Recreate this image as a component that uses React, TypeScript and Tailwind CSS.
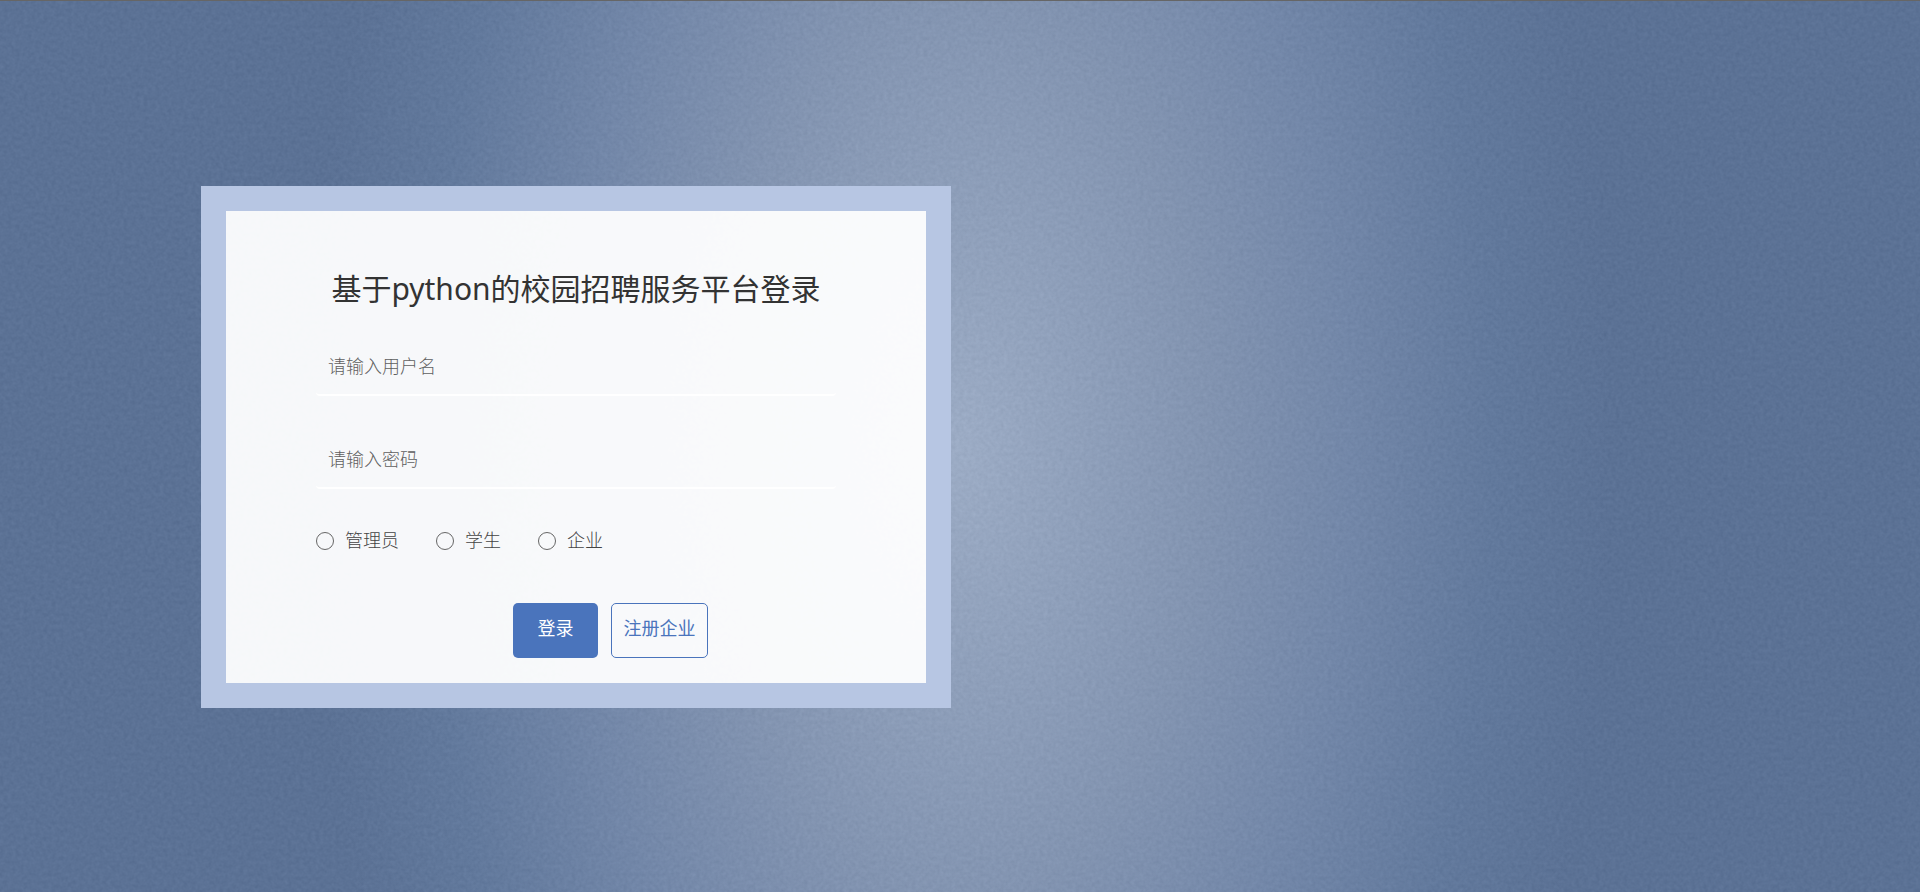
import { useState } from 'react';

const roles = ['管理员', '学生', '企业'];

const fields = [
  { name: 'username', type: 'text', placeholder: '请输入用户名' },
  { name: 'password', type: 'password', placeholder: '请输入密码' },
];

function Grain() {
  return (
    <svg className="absolute inset-0 w-full h-full opacity-[0.07] pointer-events-none" aria-hidden="true">
      <filter id="grain" colorInterpolationFilters="sRGB">
        <feTurbulence type="fractalNoise" baseFrequency="0.25" numOctaves="2" seed="4" />
        <feColorMatrix type="saturate" values="0" />
        <feComponentTransfer>
          <feFuncA type="linear" slope="0" intercept="1" />
        </feComponentTransfer>
      </filter>
      <rect width="100%" height="100%" filter="url(#grain)" />
    </svg>
  );
}

export default function App() {
  const [role, setRole] = useState('');

  return (
    <div className="relative min-h-screen overflow-hidden border-t border-[#666666] bg-[radial-gradient(650px_1200px_at_50%_50%,#9fb0cb_0%,#90a2bf_20%,#8396b5_38%,#7288ac_60%,#60799f_82%,#597197_100%)] font-['Noto_Sans','Noto_Sans_CJK_SC',sans-serif]">
      <Grain />
      <main className="relative flex min-h-screen items-center px-4 lg:pl-[201px]">
        {/* Login card */}
        <form
          className="w-full max-w-[750px] border-[25px] border-[#b7c6e3] bg-white/95 bg-clip-padding px-[90px] pt-[55px] pb-[25px]"
          onSubmit={(e) => e.preventDefault()}
        >
          <h1 className="text-center text-[30px] leading-[46px] text-[#333333]">基于python的校园招聘服务平台登录</h1>

          <div className="mt-7 flex flex-col gap-[37px]">
            {fields.map((f) => (
              <input
                key={f.name}
                name={f.name}
                type={f.type}
                placeholder={f.placeholder}
                aria-label={f.placeholder}
                className="h-14 w-full rounded border-b-2 border-white bg-transparent px-3 pb-0.5 text-lg font-light text-[#333333] outline-none placeholder:text-[#5f5f5f]"
              />
            ))}
          </div>

          <div className="mt-[37px] flex gap-[37px]">
            {roles.map((r) => (
              <label key={r} className="flex items-center gap-[11px] text-lg font-light text-[#444444]">
                <input
                  type="radio"
                  name="role"
                  value={r}
                  checked={role === r}
                  onChange={() => setRole(r)}
                  className="size-[18px] appearance-none rounded-full border border-[#666666] checked:border-[5px] checked:border-[#4a74bc]"
                />
                <span className="pb-0.5">{r}</span>
              </label>
            ))}
          </div>

          <div className="mt-[47px] flex justify-center gap-[13px] pl-[69px]">
            <button type="submit" className="h-[55px] w-[85px] rounded-[5px] bg-[#4a74bc] pb-1.5 text-lg text-white">
              登录
            </button>
            <button type="button" className="h-[55px] w-[97px] rounded-[5px] border border-[#4a74bc] pb-1.5 text-lg text-[#4a74bc]">
              注册企业
            </button>
          </div>
        </form>
      </main>
    </div>
  );
}
